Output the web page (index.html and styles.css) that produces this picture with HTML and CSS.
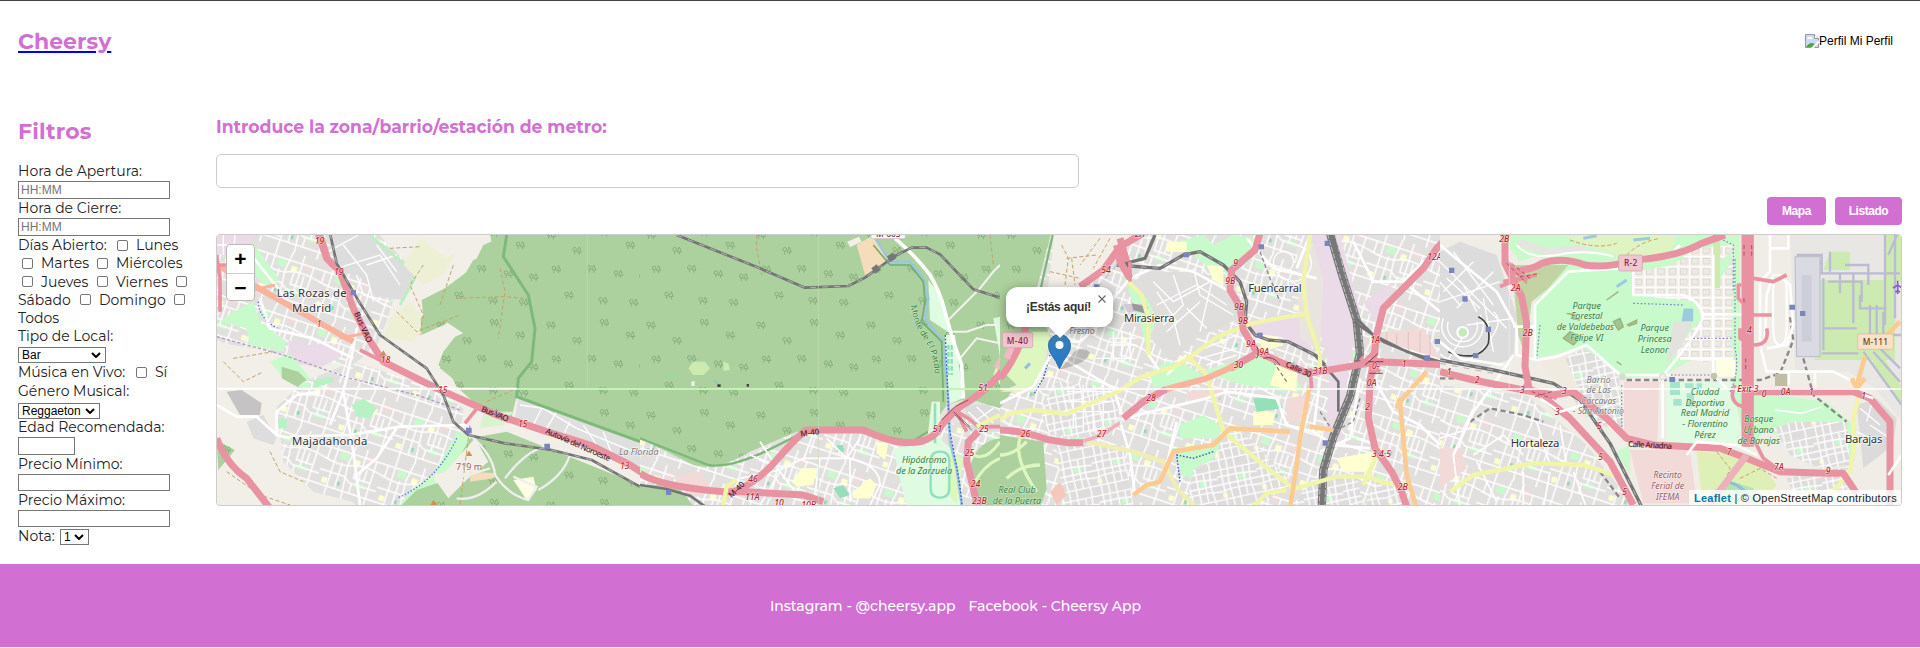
FILE: index.html
```html
<!DOCTYPE html>
<html lang="es">
<head>
<meta charset="utf-8">
<title>Cheersy</title>
<link rel="stylesheet" href="styles.css">
</head>
<body>
<header class="header">
  <a class="brand" href="#"><h1>Cheersy</h1></a>
  <div class="profile">
    <svg class="broken" viewBox="0 0 14 14"><path d="M.5.5h9l4 4v9H.5z" fill="#c9daf6" stroke="#999"/><path d="M9.500.5v4h4" fill="#fff" stroke="#999"/><path d="M2 5q0-2 2-2 2-1 3 1l1 1z" fill="#fff"/><path d="M1 13q5-7 10-2v2z" fill="#4aa83b"/><path d="M6 14l8-8v3l-5 5z" fill="#fff"/></svg><span>Perfil Mi Perfil</span>
  </div>
</header>

<main class="main">
  <aside class="filters">
    <h2>Filtros</h2>
    <div class="line l17 first">Hora de Apertura:</div>
    <input class="field" placeholder="HH:MM">
    <div class="line">Hora de Cierre:</div>
    <input class="field" placeholder="HH:MM">
    <div class="line"><span class="w98">Días Abierto:</span><i class="cb"></i><span>Lunes</span></div>
    <div class="line in4"><i class="cb"></i><span class="w56">Martes</span><i class="cb"></i><span>Miércoles</span></div>
    <div class="line in4"><i class="cb"></i><span class="w56">Jueves</span><i class="cb"></i><span class="w61">Viernes</span><i class="cb"></i></div>
    <div class="line"><span class="w62">Sábado</span><i class="cb"></i><span class="w75">Domingo</span><i class="cb"></i></div>
    <div class="line">Todos</div>
    <div class="line">Tipo de Local:</div>
    <div class="select wide">Bar<svg viewBox="0 0 10 6"><path d="M1 1l4 4 4-4"/></svg></div>
    <div class="line"><span class="w117">Música en Vivo:</span><i class="cb"></i><span>Sí</span></div>
    <div class="line l19">Género Musical:</div>
    <div class="select mid">Reggaeton<svg viewBox="0 0 10 6"><path d="M1 1l4 4 4-4"/></svg></div>
    <div class="line">Edad Recomendada:</div>
    <input class="field short">
    <div class="line">Precio Mínimo:</div>
    <input class="field low">
    <div class="line">Precio Máximo:</div>
    <input class="field low">
    <div class="line"><span class="w41">Nota:</span><div class="select tiny">1<svg viewBox="0 0 10 6"><path d="M1 1l4 4 4-4"/></svg></div></div>
  </aside>

  <section class="content">
    <label class="zone" for="zone">Introduce la zona/barrio/estación de metro:</label>
    <input class="search" id="zone">
    <div class="buttons"><button class="b1">Mapa</button><button class="b2">Listado</button></div>
    <div class="map">
      <svg class="tiles" viewBox="217 235 1684 270">
        <defs>
          <g id="tree" fill="none" stroke="#7ba571" stroke-width="2.300"><circle cx="6" cy="7" r="5.500"/><path d="M6 12v10M20 0l-7 15h13zM20 15v8"/></g>
          <pattern id="wood" width="330" height="270" patternUnits="userSpaceOnUse"><rect width="330" height="270" fill="#add19e"/><use href="#tree" x="20" y="20"/><use href="#tree" x="98" y="66"/><use href="#tree" x="180" y="12"/><use href="#tree" x="258" y="50"/><use href="#tree" x="36" y="122"/><use href="#tree" x="142" y="120"/><use href="#tree" x="222" y="136"/><use href="#tree" x="298" y="146"/><use href="#tree" x="74" y="200"/><use href="#tree" x="176" y="216"/><use href="#tree" x="268" y="222"/></pattern>
          <pattern id="town" width="180" height="165" patternUnits="userSpaceOnUse" patternTransform="rotate(18)"><rect width="180" height="165" fill="#e2e0de"/><path d="M46 30h26v20H46zM112 105h30v14h-30z" fill="#c8facc"/><path d="M92 40h18v18H92zM14 118h16v16H14z" fill="#ffffcf"/><path d="M128 18h18v22h-18z" fill="#f2dad9"/><path d="M62 118h8v12h-8z" fill="#94d9b4"/><path d="M0 26h180M0 60q60 14 90 0t90 0M0 98h76l20 14h84M0 142h180M34 0v165M84 0l-8 60 10 105M120 0v112M156 26v139M58 60v82M104 60v34h52M12 26v34M136 60v38M104 112v30" fill="none" stroke="#fff" stroke-width="4.500"/></pattern>
          <pattern id="dense" width="120" height="120" patternUnits="userSpaceOnUse" patternTransform="rotate(-12)"><rect width="120" height="120" fill="#dedddc"/><path d="M64 40h22v14H64z" fill="#c8facc"/><path d="M6 86h14v14H6z" fill="#fff8c8"/><path d="M0 16h120M0 36h60l60 6M0 60h120M0 82q60-12 120 0M0 106h120M14 0v120M36 0l-4 60 4 60M58 0v120M80 16v90M102 0l-6 60 6 60" fill="none" stroke="#fff" stroke-width="4.200"/></pattern>
          <pattern id="blocks" width="34" height="31" patternUnits="userSpaceOnUse"><rect width="34" height="31" fill="#f2efe9"/><rect x="7" y="7" width="20" height="17" fill="#eceae5" stroke="#d9d0c9" stroke-width="2"/><path d="M0 1h34M1 0v31" stroke="#fff" stroke-width="5"/></pattern>
        </defs>

        <!-- west: Las Rozas, Majadahonda -->
        <svg x="210" y="225" width="430" height="285" viewBox="0 0 1290 855">
          <rect width="1290" height="855" fill="#f2efe9"/>
          <path d="M0 0h480l140 145-70 80-30 90-20 50-80 60-150-30-230-40L0 330z" fill="url(#town)"/>
          <path d="M355 30h125l138 115-40 80-70-10-60-60-70-20z" fill="#dedddd"/>
          <path d="M355 80l90-50M380 130l130-40 60 90M440 150l20 60 80 20M500 60l60 80M400 60l70 90 20 80M470 120l90-30" class="st"/>
          <path d="M20 30h110l-40 75-70-20z" fill="#ebdbe8"/><path d="M40 30v60M75 30l-6 70M20 60h100" class="st"/>
          <path d="M130 55l80 110-40 15-30-20zM30 290l80 20 10 50 100 20 10-30-80-60-20-60-60 30z" fill="#c8facc"/>
          <path d="M480 30l140 120-50 90" fill="none" stroke="#b9f0bd" stroke-width="8"/>
          <path d="M540 280l60-50 50 60-40 60-90-10zM630 40l80 60 30-20-40 70-60 30-60-60z" fill="#eef0d5"/>
          <path d="M235 345l60 15 70-5 30 40-60 30-100-10z" fill="#ebdbe8"/>
          <path d="M180 410l60-25 60 75-10 30-60-20z" fill="#c8facc"/><path d="M215 425l50 15 35 35-30 15-55-30z" fill="#add19e"/>
          <path d="M50 500l45-5 60 40-5 35-60 0z" fill="#c5c3c3"/>
          <path d="M200 545l80-75 150-60 240 75 90 65-10 90-90 130-60 80-60 10-230-60-90-90z" fill="url(#town)"/>
          <path d="M425 540l35-20 40 30-20 30-40-5zM310 465l60-10v15l-60 20zM205 580h25v30h-25z" fill="#b7f2c4"/>
          <path d="M360 760l80-80 200 40 40 60-60 75H450z" fill="url(#town)"/>
          <path d="M110 590l50-20 40 70-10 20-60-20z" fill="#ddd"/>
          <path d="M740 620l40 10-30 100-80 20zM600 800l70-50 30 90h-130z" fill="#c8facc"/>
          <path d="M20 645l55 30-50 60zM890 30h400v640l-370-155-20 80-50-10-110-100-30-60 20-60 30-40-90-60-20-40 110-70 30-50 60-20-10-60z" fill="url(#wood)"/>
          <path d="M820 60l70-30v490h-60l-90-50-50-40 10-50 35-45 70-30 15-60-60-20-120 50-5-50 70-35 80-60z" fill="url(#wood)"/>
          <path d="M632 280l60-60 60 20 10 20-60 40-68 30zM685 420l15-40 45-45 70 20-20 130-60-20z" fill="url(#wood)"/>
          <path d="M780 640l110-20 400 160v75H560l60-60 90-30z" fill="url(#wood)"/>
          <path d="M680 770l35-40 80-90 40 70-60 50-60 60z" fill="#f2efe9"/>
          <path d="M780 740l80 5-10 15-70 10z" fill="#f5dcba"/><path d="M910 765l60-10 10 40-30 30z" fill="#ffffe5"/><path d="M820 560h90l-30 40-70 10z" fill="#d9f3d0"/>
          <path d="M925 515l365 135v90l-170-90-205-70z" fill="#e0dfdf"/>
          <path d="M930 540l70 10 100 60 170 70M960 600l100 30 20-40M1000 540l-30 60M1040 560l-30 50M1120 600l40 60M1180 620l30 80" class="st"/>
          <path d="M890 30l-10 65 75 115 20 100-10 100-40 50-5 55 370 135" fill="none" stroke="#7eb97a" stroke-width="9"/>
          <path d="M540 70l90-5M640 120l-40 60 40 90-10 60M740 220l140-5 70 5M870 130l15 70-20 140M40 410l60 60 60-30M70 400l120-20M180 680l30 60 70 30M50 740l100 70 90 30M830 530l90-40M780 600l-30 240M560 260l60 60 130-50M690 240l40-120" class="path"/>
          <path d="M20 335l200 55 200 70 200 50 130 45" fill="none" stroke="#b49cc0" stroke-width="4" stroke-dasharray="10 6"/>
          <path d="M145 230q0 60 90 95M740 640q-60 130-180 180" fill="none" stroke="#4a70e0" stroke-width="4" stroke-dasharray="4 6"/>
          <path d="M20 540l60 35 60 0 60 55 40 10M240 635l180-5 150-25 200-5M400 500l30 180 20 160M400 500l-40 100M400 500l30-130 10-60M100 60l120 150M150 220l30 90 130 30 120 60M560 610l-60 90-60 50M200 630v-70l60-50 70-10" class="rd"/>
          <path d="M780 630q70 60 75 120 40 60 100 75l25-40-70-30M885 760q60-80 120-95h80q-10 80-100 130M740 760l100-30M740 820q60 10 120-50" fill="none" stroke="#eee" stroke-width="7"/>
          <path d="M20 120l180 100 140 80 90 50" class="trunk"/><path d="M130 195l65-15M390 340l75-15" class="trunk th"/>
          <path d="M20 90l10 70v100M20 120h30" class="mw"/><path d="M20 640q30 80 90 120l70 90" class="mw big"/>
          <path d="M325 25l25 75 40 40 40 110 45 90 45 70 160 80 180 80 150 50 130 40 120 60 110 70" class="mw big"/><path d="M335 30l30 95M765 595l40-50M450 375l60 30" class="mw"/>
          <path d="M360 25l20 90 70 120 60 95 140 100 50 80 30 80 45 40 110 25 140 20 120 30 145 80" class="rail"/><path d="M360 25l20 90 70 120 60 95 140 100 50 80 30 80 45 40 110 25 140 20 120 30 145 80" class="dash"/>
          <g fill="#7a85bd"><path d="M422 195h16v16h-16zM768 608h17v17h-17zM1003 656h17v16h-17z"/></g>
          <path d="M520 376l11 18h-22zM777 677l10 16h-20zM671 824l10 16h-20z" fill="#d08f55"/>
          <path d="M22 491h900" stroke="#fff" stroke-width="6"/><path d="M922 492h368" stroke="#c4f2b7" stroke-width="6"/><path d="M1132 30v460" stroke="#c0dcb6" stroke-width="2"/>
          <g class="town"><text x="200" y="216" textLength="210">Las Rozas de</text><text x="246" y="261" textLength="118">Madrid</text><text x="246" y="659" textLength="226">Majadahonda</text></g>
          <g class="num"><text x="314" y="56">19</text><text x="372" y="150">19</text><text x="512" y="413">18</text><text x="684" y="503">15</text><text x="924" y="607">15</text><text x="1230" y="731">13</text><text x="320" y="307" fill="#c33">1</text></g>
          <g class="road"><text transform="translate(432 265) rotate(66)">Bus-VAO</text><text transform="translate(812 558) rotate(22)" textLength="86">Bus-VAO</text><text transform="translate(1005 624) rotate(24)" textLength="210">Autovía del Noroeste</text></g>
          <text x="738" y="736" class="peak">719 m</text>
        </svg>

        <!-- centre west: Monte de El Pardo -->
        <svg x="640" y="225" width="360" height="285" viewBox="0 0 1080 855">
          <rect width="1080" height="855" fill="#e6e3e0"/>
          <path d="M0 640l205 80 130-30 120-70 410 10 215-100v325H0z" fill="url(#town)"/>
          <path d="M0 20h1080v530l-35-10-60-20-65 20-55 80-55 30-160-30-180 0-140 60q-100 60-170 40L0 640z" fill="url(#wood)"/>
          <path d="M0 640l205 80q60 10 170-40l120-60h160l160 30 50-30" class="edge"/>
          <path d="M650 60l50-30 50 80-75 40z" fill="#f5dcba"/><path d="M622 50l35-15 8 15-35 17z" fill="#f2efe9"/>
          <path d="M865 165l45 60 20 100-60-40zM915 330h30l25 190-50 20zM1060 280l20-5v120l-10-60z" fill="#dffce2"/>
          <path d="M1080 390l-20 60 20 30z" fill="#def6c0"/>
          <path d="M875 530h25v110l60 60 0 150H800l-40-180 100-10z" fill="#dffce2"/><path d="M930 680l40 20-20 140-30-40z" fill="#def6c0"/>
          <path d="M0 780h110l60 75H0z" fill="#add19e"/><path d="M100 755l80-15 40 60-70 20z" fill="#f2dad9"/><path d="M455 770l30-40 45 0-10 50-50 5zM640 800l50-40 20 20-20 40h-50zM710 650l35 5-10 50-25-20z" fill="#ffffcf"/><path d="M590 660h20v20h-20zM580 790l30-10 20 30-30 10z" fill="#94e0b8"/>
          <path d="M985 760q10-110 95-120v215h-60z" fill="#add19e"/><path d="M1000 690q40 20 80-40M1000 780q30-60 80-80" fill="none" stroke="#def6c0" stroke-width="9"/>
          <path d="M975 540l70 0 35 20v60l-90 0z" fill="#dcdbdb"/><path d="M985 560l60 60M1010 545l50 50M990 600l70-50" class="st"/>
          <path d="M145 430l15-20 35 0 15 20-20 20h-30zM250 410l15 5 5 20-20 2z" fill="#cdebb0"/><path d="M70 450h45M85 446v10" stroke="#8fdcb0" stroke-width="5"/><path d="M222 466l15 14" stroke="#8cb" stroke-width="5"/><path d="M154 470l10-2 0 15-10 0z" fill="#f2efe9"/><path d="M232 478h10v8h-10zM320 477h7v8h-7z" fill="#444"/>
          <path d="M700 30l50 80 60 0 40 50 15 60-10 60 30 40 25 30 15 180 5 120 20 80 15 110" fill="none" stroke="#9bc7d8" stroke-width="8"/>
          <path d="M700 60l50 60 60 0 40 50 5 60-10 60 60 60 5 180" fill="none" stroke="#72ad72" stroke-width="5"/>
          <path d="M916 330l12 280 30 160 10 85" fill="none" stroke="#3558d8" stroke-width="4" stroke-dasharray="5 6"/>
          <path d="M1080 120l-20 20-40 50-50 50-50 50M930 320h50l60-20 50 0M960 400l50-60 70 15" fill="none" stroke="#f4f1f1" stroke-width="6"/>
          <path d="M765 40q60 50 105 110 30 50 45 110l22 80 28 80 5 100" class="rd big"/>
          <path d="M350 30v40l15 80M1050 30l10 90" class="path"/>
          <path d="M110 30l250 100 135 58 130-5 50-25 90-65 50-25h45l40 20 100 105 80 25" class="rail"/><path d="M110 30l250 100 135 58 130-5 50-25 90-65 50-25h45l40 20 100 105 80 25" class="dash"/>
          <path d="M746 103l18-12M700 138l16-12" stroke="#777" stroke-width="20"/>
          <path d="M300 760l120-25 70-35h140q90 20 90 80l-30 60M490 705l30-80M540 700l-20 140M630 700v130M330 690l100 40M360 650l60 90 60 80M560 640l60 60M660 640l-40 60M420 740l-60 100" class="rd thin"/>
          <path d="M900 680q-28 0-28 30v80q0 28 28 28t28-28v-80q0-30-28-30z" fill="none" stroke="#8fe0c0" stroke-width="7"/><path d="M885 535v120" stroke="#8fe0c0" stroke-width="8"/>
          <path d="M925 360v90M935 360v90" stroke="#88dfb8" stroke-width="7" stroke-dasharray="14 7"/>
          <path d="M0 745q60 40 250 55l60 0 180 10 60 20M270 805q80-30 140-100 60-70 90-90h170q90 40 130 37 60 5 95-35 20-40 70-75 70-40 115-95l40-90 20-30" class="mw big"/><path d="M890 620l60-60 35 20 30 25h65M950 560l30 60" class="mw"/><path d="M1015 620l-30 30-5 60 15 60 20 85" class="mw big"/><path d="M1070 430l60-110" stroke="#f2b8c3" stroke-width="20"/>
          <path d="M905 585l40-40 40-20M940 560l50 45M945 570l50 45" fill="none" stroke="#633" stroke-width="2"/>
          <path d="M250 840l10-55 30-20M1010 605l70-35" class="sec"/>
          <path d="M0 780l80 12 70 20 60 43" class="rail"/>
          <path d="M78 795h16v15H78z" fill="#7a85bd"/>
          <path d="M0 492h1080" stroke="#c4f2b7" stroke-width="6"/><path d="M535 30v820" stroke="#c4dcbb" stroke-width="2"/>
          <g class="num"><text x="1015" y="498">51</text><text x="878" y="622">51</text><text x="1018" y="622">25</text><text x="974" y="694">25</text><text x="992" y="785">24</text><text x="996" y="838">23B</text><text x="325" y="770">46</text><text x="315" y="825">11A</text><text x="403" y="842">10</text><text x="484" y="850">10B</text></g>
          <g class="road"><text transform="translate(482 635) rotate(-8)">M-40</text><text transform="translate(275 820) rotate(-45)">M-40</text></g>
          <g class="park"><text x="786" y="714" textLength="134">Hipódromo</text><text x="768" y="746" textLength="168">de la Zarzuela</text></g>
          <path id="pardo" d="M812 242q10 60 40 100 34 50 32 120" fill="none"/><text class="river"><textPath href="#pardo" textLength="220">Monte de El Pardo</textPath></text>
          <rect x="693" y="20" width="103" height="21" rx="4" fill="#f7f7f4" stroke="#bbb" stroke-width="2"/><text x="708" y="36" class="shield" fill="#555">M-605</text>
        </svg>

        <!-- centre: Mirasierra, Fuencarral -->
        <svg x="1000" y="225" width="440" height="285" viewBox="0 0 1320 855">
          <rect width="1320" height="855" fill="url(#town)"/>
          <path d="M0 0h160l-60 230 50 100L0 550z" fill="url(#wood)"/><path d="M158 30l-40 180" class="edge"/>
          <path d="M162 30h230l-150 160-100 30z" fill="#f2efe9"/><path d="M185 60l20 40-10 80M150 140l90 20M200 100l90-10M300 40l-60 80M330 40l-50 90M215 100l10 80" class="path"/>
          <path d="M0 500l50-20L10 440l80-120 60 0-20 120-30 60z" fill="#def6c0"/><path d="M20 430l10-15M75 430l15-15M65 350l15-10" stroke="#9bd" stroke-width="9"/>
          <path d="M360 190l90-50 120 0 120 20 30 120-130 60-70 70-60-60v-80z" fill="#dfdedd"/>
          <path d="M460 170l60 60 110-60M470 240l120-60 90 60M500 320l100-90M520 150l30 90-60 60M580 130l20 80 100 60M540 360l-20-80-60 0M640 150l-40 170M560 250l60 60M470 200l60 90" class="st"/>
          <path d="M380 180l60 40 30 60-30 90-20-80zM490 60l120-30 60 60-20 60-80-70zM640 60l60-30 60 10-10 70-70 40zM450 440l50-30 60 10 60 40-160 30zM600 440l200-60 80 60 30 60-180-20z" fill="#c8facc"/>
          <path d="M500 50h60v30h-60zM620 120l50 5v60l-30-20zM770 330h60l20 30-60 20zM830 420l60 20 0 60-80-20zM760 560h60v40h-60zM1010 700l110-20 0 60h-90z" fill="#ffffcf"/>
          <path d="M372 237h60l10 20-60 5z" fill="#d8c6d4"/><path d="M395 235l50 12-5 20-40-12z" fill="#999"/>
          <path d="M940 30h80l60 230-30 140-30 260-50 30 20-250-50-200zM740 290l170-20 30 120-100-55-80-10zM1090 230l90-60-50 130z" fill="#ebdbe8"/>
          <path d="M890 60l50 0 30 100-10 220-60-40z" fill="#e9e4df"/>
          <path d="M1150 320l120-10 50 90-170-50zM860 520l60-10-20 80-40 0zM560 500l110-10-10 30-100 10z" fill="#f2dad9"/><path d="M1160 320v40M1190 325v45M1225 320v60M1260 320v65M1290 330v60" stroke="#d8b8b8" stroke-width="2"/>
          <path d="M760 520l70 0 20 30-80 10z" fill="#94e0b8"/><path d="M520 670l160-20 10-50 30 40-60 60-60 20-50 40zM540 600l70-30 60 40-20 30-110 0z" fill="#c8facc"/>
          <path d="M690 600h0l70 50 120 130-110 60H560l20-100 60-40z" fill="url(#dense)"/><path d="M170 470l170 20 20 90-90 60-120-10-30-70z" fill="url(#dense)"/><path d="M170 660l200 0 30 180H190z" fill="url(#dense)"/><path d="M940 760l130-10 20 100H870zM1130 760l80 40 10 50h-130z" fill="url(#dense)"/>
          <path d="M0 630l130 20 10 140-20 60H0z" fill="#add19e"/><path d="M0 690q40 0 80-40M20 760q40-40 100-40M60 640q-20 60 50 160" fill="none" stroke="#def6c0" stroke-width="10"/>
          <path d="M150 800l30-30 20 40-30 30z" fill="#f5c8be"/>
          <path d="M150 390l-20 70-30 50" fill="none" stroke="#3558d8" stroke-width="4" stroke-dasharray="5 5"/><path d="M640 680l-60 20-50-10 10 80" fill="none" stroke="#3558d8" stroke-width="4" stroke-dasharray="5 5"/>
          <path d="M190 400l150 90 30 90M370 580l250-60 60-20 150 20 30 80 80 20 60 40 110 10M360 590l30 100 15 120M150 395l-50 90-100 50M300 270l90-110 90-40 100 20 110 60M440 380l40 60M740 40l80 90 130 30M930 30l-40 100M1060 50l60 120 90 0 110 90M1210 170l60-60 50-20M1080 460l-30 180-90 40M1120 460l60 100 80 40 60 60M560 390l-60 60M180 350l60 0 90-80M530 590l-30 130M1130 660l-60-20M960 460l-20 160" class="rd"/>
          <path d="M330 340h80M330 360h80M290 400h100M340 320v90M365 320v90M390 320v90M200 500h150M190 530h150M180 560h160M220 480v130M250 480v140M280 480v140M310 480v130M590 380l120-50M600 400l110-30M620 420l90-30M850 80a30 30 0 1 0 1 0M830 140a55 55 0 1 0 60-80" class="st"/>
          <path d="M465 30l-30 70-80 20M350 120l130 10 70-40 50-10 70 40 50 50 20 60-5 60 30 40 40 15 60 5 80 40 30 30" class="rail big"/><path d="M350 120l130 10 70-40 50-10 70 40 50 50 20 60-5 60 30 40 40 15 60 5 80 40 30 30M350 120l-60 70" class="dash"/>
          <path d="M990 25l35 120 45 140 10 100-30 130-50 120-30 100-5 120" fill="none" stroke="#777" stroke-width="25"/><path d="M982 25l35 120 45 140 10 100-30 130-50 120-30 100-5 120M1004 25l30 120 45 140 10 100-30 130-50 120-30 100-5 120" fill="none" stroke="#ccc" stroke-width="2.500" stroke-dasharray="16 5"/>
          <path d="M1070 280l50 50 100 50 100 30M1060 290l90 60 170 70M945 390l70 80 0 90" class="rail"/>
          <path d="M780 80l30 80 30 70M820 410l40 60M960 560l40 60 60-30 20-70" fill="none" stroke="#888" stroke-width="4" stroke-dasharray="12 8"/>
          <path d="M0 585l30-20 70-10 100 12 90-40 70-30 60-40 100-30 50-30 80-60 100-40 100-20 70-10h10M385 170l40 40 20 70v110M560 390l60 60 30 100 20 70 120 100 90 70M930 30l-20 140 10 100 40 120v40M870 795l140-40 90 0 60 20h70M760 845l40-40 60-10M1130 690l-40 90" class="sec"/><path d="M260 650l140 30 90 30 40 80 60 60" class="sec pale"/>
          <path d="M400 810l40-30 40-10 40-90 120-20 50-50 180 10M930 480l-30 160-10 80-20 130M1280 440l-80 90 20 220 30 100" class="prim"/><path d="M930 605l70 10M1200 520l-10 30" class="prim"/>
          <path d="M0 460q50-60 80-160M0 615q60 0 140 28l60 10 50 0" class="mw big"/><path d="M20 400l30-70" stroke="#f2b8c3" stroke-width="20"/>
          <path d="M430 25l-70 40-50 70-70 50M350 60l10 50 30 50M360 40l20 70" class="mw big"/><path d="M390 110v60" class="mw"/>
          <path d="M250 648l50-15 60-40" class="mw pale"/>
          <path d="M370 580l60-50 70-38M690 430l75-42" class="mw big"/><path d="M500 492l120-32 90-40" class="trunk big"/>
          <path d="M780 25l-15 50-70 60-5 60 30 50 10 70 40 65 90 40 65 25 90-15 120-20 210 10 20 10" class="mw big"/>
          <path d="M1340 40l-30 30-40 60-60 60-60 60-20 80-10 80-10 60-5 110 20 90 50 70 30 60 20 60" class="mw big"/><path d="M1090 420q20-40 45-40M1080 400l60 40M1150 400l-40 60M935 490l-5-60" class="mw"/>
          <path d="M1095 420l40-35M1108 445h40M1105 410h45M770 400q10-20 0-35M790 400q30-10 50 20" fill="none" stroke="#633" stroke-width="2.500"/>
          <path d="M551 82h16v15h-16zM776 58h16v15h-16zM974 47h16v16h-16zM771 323h17v15h-17zM1304 342h16v15h-16zM1273 391h17v16h-17zM968 646h17v16h-17zM282 178h16v12h-16z" fill="#7a85bd"/>
          <path d="M0 492h1320" stroke="#fff" stroke-width="5"/>
          <g class="town"><text x="372" y="291" textLength="152">Mirasierra</text><text x="745" y="200" textLength="160">Fuencarral</text></g>
          <g class="num"><text x="304" y="144">54</text><text x="404" y="36">2A</text><text x="700" y="124">9</text><text x="676" y="177">9B</text><text x="702" y="255">9B</text><text x="714" y="297">9B</text><text x="738" y="367">9A</text><text x="778" y="391">9A</text><text x="701" y="429">30</text><text x="938" y="448">31B</text><text x="1111" y="355">1A</text><text x="1116" y="432">0-</text><text x="1205" y="426">1</text><text x="1100" y="484">0A</text><text x="1096" y="555">2</text><text x="1116" y="697">3·4·5</text><text x="1193" y="796">2B</text><text x="1282" y="104">12A</text><text x="439" y="528">28</text><text x="62" y="635">26</text><text x="290" y="635">27</text></g>
          <g class="road"><text transform="translate(855 424) rotate(24)" textLength="82">Calle 30</text></g>
          <text x="208" y="328" class="place">Fresno</text>
          <g class="shieldbox"><rect x="7" y="322" width="91" height="46" rx="5"/><text x="20" y="356" textLength="64" class="shield">M-40</text></g>
        </svg>

        <!-- east: Valdebebas, Hortaleza, Barajas -->
        <svg x="1440" y="225" width="480" height="285" viewBox="0 0 1440 855">
          <rect width="1440" height="855" fill="#f0ece6"/>
          <path d="M0 480l260 30 180 150 150 195H0z" fill="url(#town)"/><path d="M0 670h60l20 60-80 60z" fill="#f2dad9"/>
          <path d="M0 80l60-30 110 40 60 180-10 130-90 30L0 400z" fill="#dddcdc"/>
          <path d="M0 110l200 200M40 80l120 160M0 230l180-60M20 160l100 90M-10 160l70 80M50 250l110-110M10 200l90-90M80 300l140-20M130 220l30 160M20 410l60-90M70 180l40 80" class="st"/>
          <path d="M10 280a62 62 0 1 0 110-10M25 290a45 45 0 1 0 85 0M-20 370q80 80 150 0t30-110" class="st"/><path d="M115 275q40 20 30 80-30 60-120 25" fill="none" stroke="#444" stroke-width="5"/>
          <circle cx="68" cy="322" r="16" fill="#c8e8b8" stroke="#fff" stroke-width="6"/>
          <path d="M180 30h720l0 470-20-20 0-110-60 0-150 80-120 10-120-90-140 40-10-170 60-90-40-60-60 20z" fill="#c8facc"/>
          <path d="M215 120l170 0-60 70-50 40-20 160-20-60z" fill="#c4d3a3"/><path d="M370 30h340l-20 50-60 20-100-10-100-30z" fill="#dff4c2"/><path d="M390 45q80 30 140 10M560 90q40-40 100-50" class="path"/><path d="M430 40l40-8M580 45l50-5M560 165l-30 20M735 255l20 0v30h-25z" stroke="#9cccdc" fill="#9cccdc" stroke-width="9"/>
          <path d="M230 60l100 35 80-15 70 5-60-25-100 10-80-30z" fill="#e7e5df"/><path d="M230 60q40 50 150 25 80-10 140 10" fill="none" stroke="#fff" stroke-width="6"/>
          <path d="M580 140l120-20 60-50 120-10-5 350-90 0-90-20 90-110-20-50-185-20z" fill="url(#blocks)"/>
          <path d="M700 290l60 0-40 80-40 40z" fill="#e4e2df"/><path d="M825 120l50-40 0 30-40 60z" fill="#c8facc"/>
          <path d="M290 400l90-20 60 90 0 60-60-30z" fill="#f0ebe0"/><path d="M375 400l55-30 110 70-5 60-110 10z" fill="url(#dense)"/>
          <path d="M440 480h100l10 150-120-60-30-50z" fill="url(#dense)"/>
          <path d="M552 470h105l-5 180-100-10zM570 675h180l20 160H610z" fill="#f2dad9"/>
          <path d="M680 470l200 0 40 190-240-10z" fill="#dffce2"/><path d="M690 470h30v40h-30zM735 475h25v20h-25zM700 522h25v20h-25zM740 505h22v40h-22zM770 475h16v20h-16z" fill="#a5e3cc"/>
          <path d="M828 405h58v50h-58z" fill="#ffffe5"/>
          <path d="M880 500l60 0 220 30 90 80-20 100-120-10-130-90-60 70zM530 680l40-20v90z" fill="#c8facc"/>
          <path d="M770 680l170 10 70 90-60 75H790z" fill="#def0b5"/><path d="M810 800l70-30 60 20 20 60H820z" fill="#b5e3b5"/><path d="M860 770q50 10 80 60" fill="none" stroke="#8cc3d4" stroke-width="9"/><path d="M830 680l40 50-30 80M900 760l60-30 50 30" class="path"/>
          <path d="M1000 610l60-20 160 0 10 130-90 10-90-40z" fill="url(#dense)"/><path d="M1040 760l150-30 40 0-20 125h-130z" fill="url(#dense)"/><path d="M1250 540l60-20 60 60-10 80-90 70z" fill="#dcdada"/><path d="M1260 550l60 50M1300 520l-20 70M1290 600l60 40M1250 620l60 30" class="st"/>
          <path d="M1050 30h335v560l-80-100-80-50-160 0-10-290z" fill="#e8e7e3"/>
          <path d="M1125 165h240v240h-240zM1335 30h50v140h-50zM1125 370h100l-20 35h-80zM1310 360l76 130v50l-90-120zM1170 80h60v55h-80zM820 40h20v150h-20z" fill="#cdebb0"/>
          <path d="M1335 20v280M1365 20v260M1345 90l30-70M1130 145h250M1130 185v210M1145 385h110M1150 160v215M1165 170h100v60M1070 90h75v55M1070 115h75M1090 150h20v210M1200 145v60M1240 145v150M1260 210v40l40 0M1290 240v110M1310 240v90M1330 260v100M1260 250h80M1270 380l115 160M1300 380l80 90M1320 370l60 60M1170 80v60M1215 120h70v60M1255 330h130M1150 310h100" fill="none" stroke="#bbbbd1" stroke-width="7"/>
          <path d="M1065 95h75v300h-70z" fill="#dadae3" stroke="#b9b9ca" stroke-width="3"/><path d="M1085 150h30v200h-30z" fill="#cecedb"/>
          <path d="M820 30l60 30 0 140M550 450h280M580 235l150 5M760 340h120M545 480v130M300 300l-10 100M870 500q30-60 15-130V100" fill="none" stroke="#7e7ed2" stroke-width="3.500" stroke-dasharray="5 6"/>
          <path d="M0 460l60 0M560 465h400l60-20 40-100-10-70M1090 400l30 110 100 80M480 740l60 80M90 590l60-40 100 20 60 20" fill="none" stroke="#888" stroke-width="7" stroke-dasharray="16 10"/>
          <path d="M0 60l60 50 110 90 60 110 0 80 60 15 60-10 90-35 100 90 150 0M285 400v-160l100-100 150-10M580 140v70h150q50 20 60 60-10 50-120 180M668 450v190M690 90l30-30M820 90v360M790 268h150M720 400h160M220 305h60M40 690l60-130 60-80 60-90M0 350l60 50 130 20M820 450l40 40M990 30v110l-30 30v190l20 80h200l60 30 20 30M1045 30v40h-55M1125 440v70M1045 440v40M980 370l60-10 20-60-10-120-30-30h-20l-20 60-5 140" class="rd"/>
          <path d="M1000 190q0-30 20-30t20 30v120q0 50-20 50t-20-50z" fill="none" stroke="#fff" stroke-width="7"/><path d="M1005 555l80 10 60-20M100 690l90-60 60 60M0 640l90-30M110 710l60 120M40 690l20 160M290 590l40 130M360 600l20 120M250 740l0 100M330 740l-20 110M400 740l40 110" class="rd thin"/>
          <path d="M1005 185v125M1020 185v125" stroke="#eee" stroke-width="4"/>
          <path d="M30 800l70-50 180-35 150 5 90 30M1260 500l-20 80v100l-10 60-60 70-60 30" class="sec"/>
          <path d="M1275 395l-20 70-5 30M1380 290l-60 60" class="prim"/><path d="M1235 460l15 30 25-30" class="prim"/>
          <path d="M0 405l160 30 180 40 80 50 90 130 100 200" class="rail big"/><path d="M0 405l160 30 180 40 80 50 90 130 100 200M0 415l160 30" class="dash"/>
          <path d="M0 440l100 25 150 30 90 15 60-10 100 80 60 60 80 20 200 10 80 30 100 40 140 5 50 0 40 60M290 500l100 80 120 130 70 130M195 25v90l50 100 15 80-5 130 15 80M215 140q60-5 90-25 60-20 130 5 70 10 150-15 130-10 200-50l70-25M940 500h300l50 20 60 70 0 265" class="mw big"/><path d="M923 25v640" stroke="#e892a2" stroke-width="37"/>
          <path d="M180 185l50-20 40-10M200 110l60 60M190 170l100-20M905 180h-10v40l20 20M940 160l60 10 40-20M940 270h55M900 310v30l20 10M940 360q50 0 40-50M885 480q-20 40 10 60l30 10M940 640l30 60 40 30M250 480l100 40" class="mw"/><path d="M920 690l-120 160" class="mw big pale"/>
          <path d="M200 115l60 60M215 115l60 50M240 155l60-10M275 500l60 20M285 515l50-15M912 60v40M935 60v40M912 220v20M917 400v40M930 600v30" fill="none" stroke="#833" stroke-width="2" stroke-dasharray="12 8"/>
          <path d="M300 520l60 40 70-20M740 690l30-40 120 10 60 30M1385 690l-40 60M1270 510l30 10" class="rd"/>
          <path d="M1005 447h37v36h-37z" fill="#c0bda4"/>
          <circle cx="547" cy="455" r="9" fill="#c8e8b8" stroke="#ddd" stroke-width="4"/><circle cx="668" cy="455" r="9" fill="#f2efe9" stroke="#ddd" stroke-width="4"/><circle cx="822" cy="453" r="10" fill="#c0c8a8"/>
          <path d="M27 128h16v16H27zM67 214h16v16H67zM137 305h16v16h-16zM99 384h16v15H99zM688 456h17v15h-17zM1048 239h17v15h-17zM1080 258h16v15h-16z" fill="#7a85bd"/>
          <path d="M1373 167v40M1359 189l14-9 14 9M1366 201l7-4 7 4" fill="none" stroke="#8461c4" stroke-width="5"/>
          <path d="M380 265l30 5-15 10 25 5M370 340l20-20 35 15-25 25zM440 235l40 10M500 225l35-25M520 290l20-10 10 25-15 10zM560 300l30-15v10l-25 8M530 410l15 10" fill="#9ac794" stroke="#a5ad77" stroke-width="4"/>
          <path d="M0 492h1385" stroke="#fff" stroke-width="5"/><path d="M208 30v460" stroke="#fff" stroke-opacity=".6" stroke-width="2"/>
          <g class="town"><text x="212" y="665" textLength="146">Hortaleza</text><text x="1215" y="653" textLength="112">Barajas</text></g>
          <g class="num"><text x="178" y="52">2B</text><text x="212" y="197">2A</text><text x="248" y="332">2B</text><text x="20" y="449">1</text><text x="104" y="474">2</text><text x="240" y="504">3</text><text x="366" y="507">3</text><text x="345" y="569">3</text><text x="471" y="613">5</text><text x="475" y="705">5</text><text x="547" y="810">5</text><text x="921" y="325">4</text><text x="892" y="500">Exit 3</text><text x="965" y="516">0</text><text x="1022" y="510">0A</text><text x="1107" y="511">1</text><text x="1264" y="521">1</text><text x="860" y="690">7</text><text x="1002" y="736">7A</text><text x="1157" y="747">9</text></g>
          <text transform="translate(564 665) rotate(3)" class="road" textLength="132">Calle Ariadna</text>
          <g class="park mid"><text x="440" y="251">Parque</text><text x="440" y="283">Forestal</text><text x="436" y="315" textLength="172">de Valdebebas</text><text x="440" y="347">Felipe VI</text><text x="644" y="319">Parque</text><text x="644" y="351">Princesa</text><text x="644" y="383">Leonor</text><text x="795" y="510">Ciudad</text><text x="795" y="542">Deportiva</text><text x="795" y="574">Real Madrid</text><text x="795" y="607">- Florentino</text><text x="795" y="639">Pérez</text><text x="956" y="592">Bosque</text><text x="956" y="624">Urbano</text><text x="956" y="656">de Barajas</text></g>
          <g class="place mid"><text x="476" y="473">Barrio</text><text x="476" y="504">de Las</text><text x="476" y="536">Cárcavas</text><text x="475" y="567">- San Antonio</text></g>
          <g class="place mid brown"><text x="683" y="760">Recinto</text><text x="683" y="792">Ferial de</text><text x="683" y="824">IFEMA</text></g>
          <g class="shieldbox"><rect x="536" y="90" width="71" height="48" rx="5"/><text x="552" y="123" textLength="40" class="shield">R-2</text></g>
          <g class="shieldbox tan"><rect x="1253" y="327" width="107" height="46" rx="5"/><text x="1268" y="359" textLength="76" class="shield">M-111</text></g>
        </svg>
        <text x="619" y="455" class="place small">La Florida</text>
        <text class="park small mid-anchor"><tspan x="1017" y="493">Real Club</tspan><tspan x="1017" dy="11">de la Puerta</tspan></text>
      </svg>

      <svg class="marker" viewBox="0 0 50 50">
        <defs><linearGradient id="pin" x2="0" y2="1"><stop stop-color="#3a7fb8"/><stop offset="1" stop-color="#1f7bcb"/></linearGradient></defs>
        <path d="M13 38L28 19q9-6 15 2-4 8-12 11z" fill="#000" opacity=".18"/>
        <path d="M12.500 37Q10 30 4 22 1.500 18 1.500 13.500A11 11 0 0 1 23.500 13.500Q23.500 18 21 22 15 30 12.500 37z" fill="url(#pin)" stroke="#2c6d9f"/>
        <circle cx="12.500" cy="13" r="4" fill="#fff"/>
      </svg>
      <div class="popup"><b>¡Estás aquí!</b><svg class="close" viewBox="0 0 8 8"><path d="M.5.5l7 7M7.500.5l-7 7"/></svg></div>
      <div class="zoom"><span>+</span><span>−</span></div>
      <div class="credit"><span class="leaf">Leaflet</span> | © OpenStreetMap contributors</div>
    </div>
  </section>
</main>

<footer class="footer"><span class="ig">Instagram - @cheersy.app</span><span class="fb">Facebook - Cheersy App</span></footer>
</body>
</html>
```
FILE: styles.css
```css
* { box-sizing: border-box; }
body { margin: 0; background: #fff; font-family: Montserrat, Inter, "Open Sans", sans-serif; height: 648px; overflow: hidden; border-top: 1px solid #444; }
h1, h2 { margin: 0; font-size: 22px; line-height: 28px; font-weight: 700; color: #d16fd3; }
.header { height: 109px; padding: 27px 26px 0 18px; display: flex; justify-content: space-between; align-items: flex-start; }
.brand { color: #0000ee; text-decoration: underline; text-decoration-thickness: 2px; text-underline-offset: 2px; }
.profile { display: flex; margin-top: 6px; height: 14px; font: 12px/14px "Liberation Sans", Arial, sans-serif; color: #000; }
.broken { width: 14px; height: 14px; display: block; }
.profile span { width: 75px; white-space: nowrap; }
.main { display: flex; height: 454px; }
.filters { width: 216px; padding: 8px 0 0 18px; font-size: 14px; font-weight: 400; color: #222; }
.filters h2 { height: 45px; letter-spacing: .2px; }
.line { height: 18.200px; line-height: 16px; padding-bottom: 2px; display: flex; align-items: center; white-space: nowrap; }
.line.first { height: 18px; }
.line.in4 { padding-left: 4px; }
.line.l19 { height: 19px; }
.w98 { width: 99px; } .w56 { width: 56px; } .w61 { width: 60px; } .w62 { width: 62px; } .w75 { width: 75px; } .w117 { width: 118px; } .w41 { width: 42px; }
.cb { width: 11px; height: 11px; border: 1px solid #767676; border-radius: 2px; margin-right: 8px; flex: none; }
.field { display: block; width: 152px; height: 18px; margin: 0 0 1px; padding: 0 2px; border: 1px solid #767676; border-radius: 0; font: 12px "Liberation Sans", Arial, sans-serif; }
.field::placeholder { color: #757575; }
.field.short { width: 57px; }
.field.low { height: 17px; }
.select { height: 16px; border: 1px solid #767676; padding: 0 4px 0 3px; display: flex; align-items: center; justify-content: space-between; font: 400 12px/14px "Liberation Sans", Arial, sans-serif; color: #000; }
.select svg { width: 10px; height: 6px; fill: none; stroke: #000; stroke-width: 2; }
.wide { width: 88px; margin: 1px 0; }
.mid.select { width: 82px; margin: 1px 0 0; }
.tiny { width: 29px; margin-top: 2px; }
.content { width: 1686px; }
.zone { display: block; height: 44px; padding-top: 5px; font-size: 17.200px; line-height: 24px; font-weight: 700; color: #d16fd3; white-space: nowrap; }
.search { display: block; width: 863px; height: 34px; border: 1px solid #ccc; border-radius: 5px; }
.buttons { display: flex; justify-content: flex-end; gap: 9px; padding: 9px 0; }
.buttons button { height: 28px; padding: 0; border: 0; border-radius: 4px; background: #d16fd3; color: #fff; font: 700 12px "Liberation Sans", Arial, sans-serif; letter-spacing: -.45px; }
.b1 { width: 59px; } .b2 { width: 67px; }
.map { position: relative; height: 272px; border: 1px solid #ccc; border-radius: 4px; overflow: hidden; background: #ddd; }
.tiles { display: block; width: 1684px; height: 270px; font-family: "Noto Sans", "Open Sans", sans-serif; }
.st { fill: none; stroke: #fff; stroke-width: 4; }
.path { fill: none; stroke: #c6a267; stroke-width: 3; stroke-dasharray: 12 7; }
.rd { fill: none; stroke: #fff; stroke-width: 8; stroke-linejoin: round; }
.rd.thin { stroke-width: 5; }
.rd.big { stroke-width: 11; }
.edge { fill: none; stroke: #7eb97a; stroke-width: 7; }
.mw { fill: none; stroke: #e892a2; stroke-width: 11; stroke-linejoin: round; }
.mw.big { stroke-width: 21; }
.mw.pale { stroke: #eeb0bb; }
.trunk { fill: none; stroke: #f9b29c; stroke-width: 18; stroke-linejoin: round; }
.trunk.th { stroke-width: 9; }
.sec { fill: none; stroke: #f1f5a9; stroke-width: 13; stroke-linejoin: round; }
.sec.pale { stroke: #eeeeb5; }
.prim { fill: none; stroke: #fccb92; stroke-width: 14; stroke-linejoin: round; }
.rail { fill: none; stroke: #747474; stroke-width: 8; stroke-linejoin: round; }
.rail.big { stroke-width: 10; }
.dash { fill: none; stroke: #b5b5b5; stroke-width: 3; stroke-dasharray: 18 18; }
.town text { font-size: 34px; fill: #333; stroke: #fff; stroke-opacity: .7; stroke-width: 5; paint-order: stroke; }
.num { font-size: 26px; font-style: italic; font-weight: 500; fill: #b8232f; stroke: #fff; stroke-opacity: .7; stroke-width: 3; paint-order: stroke; }
.road { font-size: 24px; fill: #4d1c28; font-weight: 500; }
.park { font-size: 27px; font-style: italic; fill: #338044; stroke: #e4fbe4; stroke-opacity: .7; stroke-width: 3; paint-order: stroke; }
.place { font-size: 26px; font-style: italic; fill: #777; stroke: #fff; stroke-opacity: .7; stroke-width: 3; paint-order: stroke; }
.mid text, .mid-anchor { text-anchor: middle; }
.brown { fill: #96575d; }
.small { font-size: 9px; stroke-width: 1; }
.peak { font-size: 27px; fill: #99663a; stroke: #fff; stroke-opacity: .6; stroke-width: 3; paint-order: stroke; }
.river { font-size: 26px; fill: #1f7d30; stroke: #dff5dc; stroke-width: 2; paint-order: stroke; }
.shield { font-size: 25px; fill: #7b2543; font-weight: 500; }
.shieldbox rect { fill: #f0c6cf; stroke: #d89aa9; stroke-width: 2; }
.tan rect { fill: #f9e3c8; stroke: #dcb78a; }
.tan text { fill: #6f3b16; }
.zoom { position: absolute; left: 9px; top: 9px; width: 29px; height: 57px; border: 1px solid #b9b9b9; border-radius: 4px; overflow: hidden; background: #fff; display: flex; flex-direction: column; font: 700 21px/28px "Liberation Sans", Arial, sans-serif; text-align: center; color: #000; }
.zoom span { height: 28px; }
.zoom span + span { border-top: 1px solid #ccc; }
.marker { position: absolute; left: 830px; top: 97px; width: 50px; height: 50px; }
.popup { position: absolute; left: 789px; top: 52px; width: 107px; height: 40px; padding-right: 2px; border-radius: 12px; background: #fff; box-shadow: 0 3px 12px rgba(0,0,0,.4); font: 12px/40px "Liberation Sans", Arial, sans-serif; color: #333; text-align: center; white-space: nowrap; }
.popup b { letter-spacing: -.25px; }
.popup::after { content: ""; position: absolute; left: 43px; top: 40px; border: 11px solid transparent; border-top-color: #fff; border-bottom: 0; }
.close { position: absolute; right: 7px; top: 8px; width: 8px; height: 8px; fill: none; stroke: #666; stroke-width: 1.100; }
.credit { position: absolute; right: 0; bottom: 0; width: 212px; height: 15px; padding-left: 5px; background: rgba(255,255,255,.8); font: 11px/16px "Liberation Sans", Arial, sans-serif; letter-spacing: .24px; color: #222; white-space: nowrap; }
.leaf { color: #0078a8; font-weight: 700; }
.footer { height: 83px; background: #d16fd3; color: #fff; display: flex; justify-content: center; gap: 13px; padding: 32px 9px 0 0; font-size: 14px; font-weight: 500; line-height: 20px; white-space: nowrap; }
```
